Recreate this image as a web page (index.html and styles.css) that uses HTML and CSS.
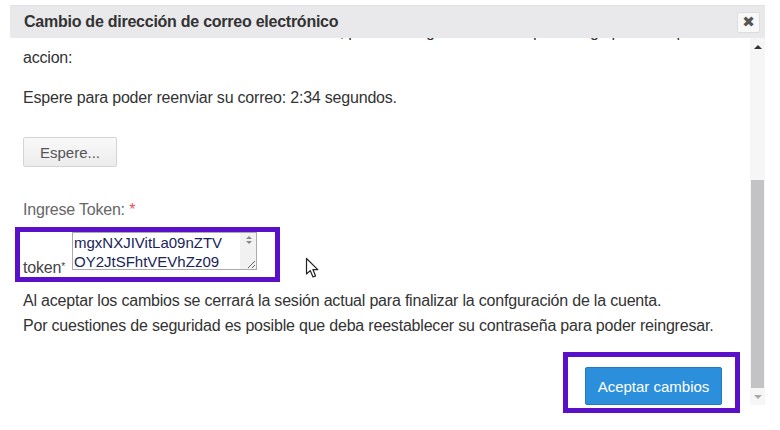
FILE: index.html
```html
<!DOCTYPE html>
<html lang="es">
<head>
    <meta charset="UTF-8">
    <meta name="viewport" content="width=device-width, initial-scale=1.0">
    <title>Cambio de dirección de correo electrónico</title>
    <link rel="stylesheet" href="styles.css">
</head>
<body>
    <div class="dialog">
        <div class="dialog-header">
            <span class="dialog-title">Cambio de dirección de correo electrónico</span>
            <button class="close-btn" type="button">&#10006;</button>
        </div>
        <div class="dialog-body">
            <div class="dialog-content">
                <p class="intro">Se ha enviado un correo a su nueva dirección, por favor ingrese el token que le llegó para completar la<br>accion:</p>
                <p class="countdown">Espere para poder reenviar su correo: 2:34 segundos.</p>

                <button class="btn-wait" type="button" disabled>Espere...</button>

                <label class="token-label" for="token">Ingrese Token: <span class="req">*</span></label>
                <div class="token-row">
                    <div class="highlight token-box">
                        <span class="token-name">token<sup>*</sup></span>
                        <div class="token-field">
                            <textarea id="token" class="token-input">mgxNXJIVitLa09nZTVOY2JtSFhtVEVhZz09</textarea>
                            <span class="spin"></span>
                        </div>
                    </div>
                    <!-- mouse pointer from the recording -->
                    <svg class="pointer" width="16" height="22" viewBox="0 0 16 22">
                        <path d="M1.5 1.5 L1.5 17 L5.2 13.6 L8 20 L10.6 18.9 L7.9 12.6 L12.8 12.6 Z" fill="#fff" stroke="#222" stroke-width="1.2" stroke-linejoin="round"/>
                    </svg>
                </div>

                <p class="notice">Al aceptar los cambios se cerrará la sesión actual para finalizar la confguración de la cuenta.<br>Por cuestiones de seguridad es posible que deba reestablecer su contraseña para poder reingresar.</p>

                <div class="actions">
                    <div class="highlight accept-box">
                        <button class="btn-accept" type="button">Aceptar cambios</button>
                    </div>
                </div>
            </div>
            <div class="scrollbar">
                <span class="arrow up"></span>
                <div class="track">
                    <div class="thumb"></div>
                </div>
                <span class="arrow down"></span>
            </div>
        </div>
    </div>
</body>
</html>
```

FILE: styles.css
```css
body {
    margin: 0;
    background-color: #fff;
    font-family: "Liberation Sans", Arial, sans-serif;
    font-size: 16px;
    letter-spacing: -0.2px;
    color: #333;
}
.dialog {
    width: 755px;
    height: 410px;
    margin: 5px 0 0 10px;
    display: flex;
    flex-direction: column;
    background: #fff;
}
.dialog-header {
    height: 33px;
    flex: none;
    display: flex;
    align-items: center;
    justify-content: space-between;
    padding: 0 5px 0 14px;
    background-color: #e9e9ec;
    border-top: 1px solid #e2e2e6;
    box-sizing: border-box;
}
.dialog-title {
    font-size: 16px;
    font-weight: bold;
    letter-spacing: -0.25px;
    color: #333;
}
.close-btn {
    width: 23px;
    height: 21px;
    padding: 0;
    border: 1px solid #ddd;
    border-radius: 2px;
    background: #f8f8f8;
    color: #555;
    font-size: 15px;
    line-height: 19px;
    font-family: "DejaVu Sans", sans-serif;
}
.dialog-body {
    flex: 1;
    display: flex;
    align-items: flex-start;
    min-height: 0;
}
.dialog-content {
    flex: 1;
    align-self: stretch;
    overflow: hidden;
    padding: 0 10px 0 13px;
}
.dialog-content p {
    margin: 0;
}
.intro {
    margin-top: -19px !important;
    line-height: 26px;
}
.countdown {
    margin-top: 16px !important;
    line-height: 21px;
}
.btn-wait {
    display: block;
    width: 94px;
    height: 30px;
    margin: 29px 0 33px;
    padding: 0;
    border: 1px solid #d4d4d4;
    border-radius: 2px;
    background: linear-gradient(#f9f9f9, #ececec);
    color: #555;
    font-family: inherit;
    font-size: 15px;
}
.token-label {
    display: block;
    line-height: 20px;
    color: #666;
}
.req {
    color: #e0554f;
}
.token-row {
    display: flex;
    align-items: flex-end;
    margin: 7px 0 0 -8px;
}
.highlight {
    border: 5px solid #5a10c8;
}
.token-box {
    width: 252px;
    height: 45px;
    display: flex;
    align-items: flex-start;
    padding-left: 3px;
}
.token-name {
    align-self: flex-end;
    line-height: 16px;
    margin-bottom: 1px;
    width: 49px;
    color: #444;
}
.token-name sup {
    font-size: 10px;
    vertical-align: 3px;
}
.token-field {
    position: relative;
    display: flex;
}
.token-input {
    width: 185px;
    height: 38px;
    box-sizing: border-box;
    margin: 0;
    padding: 0 23px 0 1px;
    border: 1px solid #aaa;
    background: linear-gradient(to left, #f1f1f1 16px, #fff 16px);
    font-family: "Liberation Sans", Arial, sans-serif;
    font-size: 15px;
    letter-spacing: 0;
    line-height: 19px;
    color: #18245a;
    overflow: hidden;
    resize: both;
}
/* small up/down arrows of the textarea's own scrollbar */
.spin {
    position: absolute;
    top: 4px;
    right: 5px;
    display: flex;
    flex-direction: column;
    gap: 2px;
}
.spin::before,
.spin::after {
    content: "";
    border: 3px solid transparent;
}
.spin::before {
    border-top: 0;
    border-bottom: 3px solid #888;
}
.spin::after {
    border-bottom: 0;
    border-top: 3px solid #888;
}
.pointer {
    margin: 0 0 3px 25px;
}
.notice {
    margin-top: 6px !important;
    line-height: 25px;
}
.actions {
    display: flex;
    justify-content: flex-end;
    margin-top: 14px;
}
.accept-box {
    padding: 10px 13px 3px 17px;
}
.btn-accept {
    width: 137px;
    height: 38px;
    border: 1px solid #2379bd;
    border-radius: 2px;
    background-color: #2b8fdb;
    color: #fff;
    font-family: inherit;
    font-size: 15px;
}
.scrollbar {
    width: 15px;
    height: 367px;
    flex: none;
    display: flex;
    flex-direction: column;
    background: #f6f6f6;
}
.arrow {
    height: 17px;
    flex: none;
    display: flex;
    align-items: center;
    justify-content: center;
}
.arrow.up::before {
    content: "";
    border: 4px solid transparent;
    border-top: 0;
    border-bottom: 4px solid #333;
}
.arrow.down::before {
    content: "";
    border: 4px solid transparent;
    border-bottom: 0;
    border-top: 4px solid #aaa;
}
.track {
    flex: 1;
    display: flex;
    flex-direction: column;
    justify-content: flex-end;
}
.thumb {
    height: 208px;
    margin: 0 1px;
    background-color: #c3c3c5;
}
```
